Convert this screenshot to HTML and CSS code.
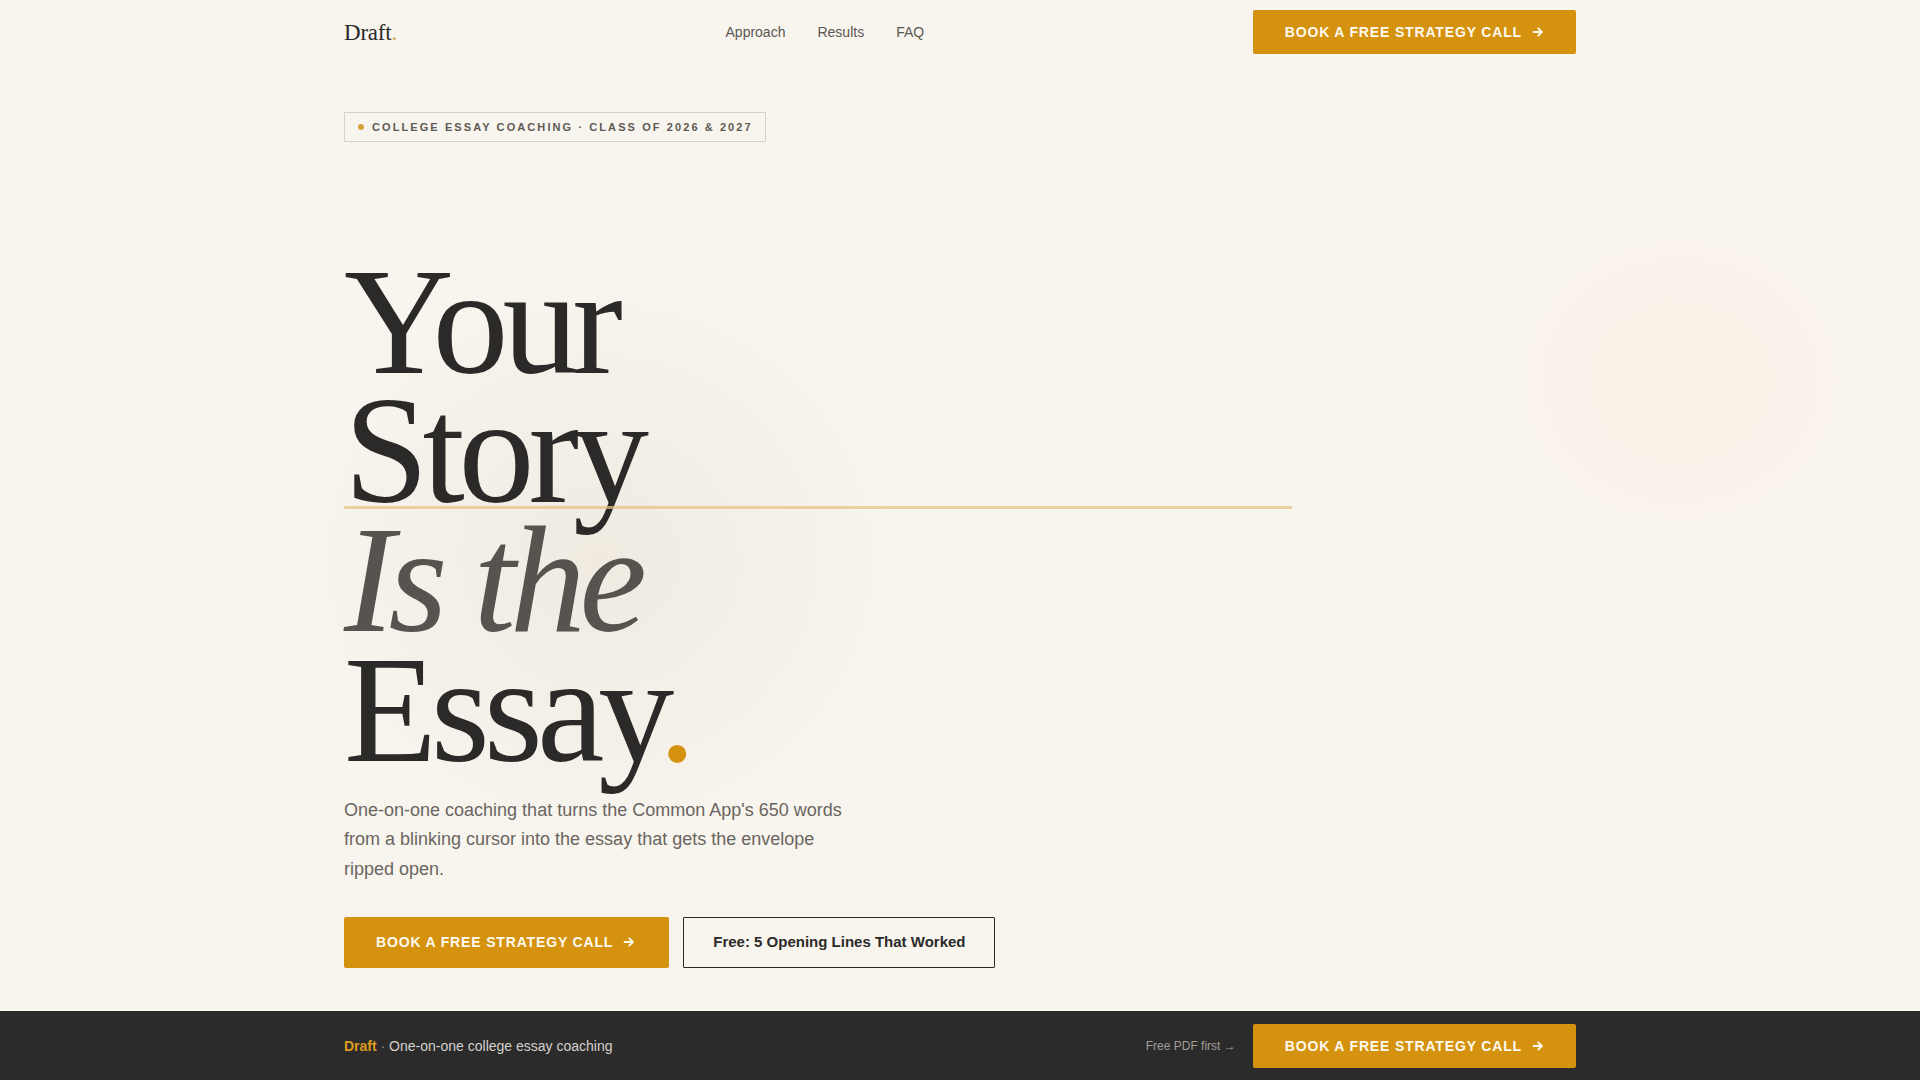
FILE: index.html
```html
<!DOCTYPE html>
<html lang="en">
<head>
<meta charset="utf-8">
<title>Draft — College Essay Coaching</title>
<link rel="stylesheet" href="styles.css">
</head>
<body>
  <header class="topbar">
    <div class="wrap topbar-inner">
      <a class="logo" href="#">Draft<span class="logo-dot">.</span></a>
      <nav class="nav">
        <a href="#approach">Approach</a>
        <a href="#results">Results</a>
        <a href="#faq">FAQ</a>
      </nav>
      <a class="btn btn-primary btn-compact" href="#book">BOOK A FREE STRATEGY CALL
        <svg class="arrow" viewBox="0 0 12 12" aria-hidden="true"><path d="M1.5 6h8.5M6.2 2.3L9.9 6 6.2 9.7"/></svg>
      </a>
    </div>
  </header>

  <main class="hero wrap">
    <div class="badge"><span class="badge-dot"></span>COLLEGE ESSAY COACHING · CLASS OF 2026 &amp; 2027</div>

    <h1 class="headline">
      <span class="line">Your</span>
      <span class="line line-mark">Story</span>
      <span class="line line-italic">Is the</span>
      <span class="line">Essay<span class="accent">.</span></span>
    </h1>

    <p class="lede">One-on-one coaching that turns the Common App's 650 words from a blinking cursor into the essay that gets the envelope ripped open.</p>

    <div class="actions">
      <a class="btn btn-primary btn-large" href="#book">BOOK A FREE STRATEGY CALL
        <svg class="arrow" viewBox="0 0 12 12" aria-hidden="true"><path d="M1.5 6h8.5M6.2 2.3L9.9 6 6.2 9.7"/></svg>
      </a>
      <a class="btn btn-outline" href="#pdf">Free: 5 Opening Lines That Worked</a>
    </div>
  </main>

  <div class="cta-bar">
    <div class="wrap cta-bar-inner">
      <p class="cta-brand"><strong>Draft</strong> <span class="sep">·</span> One-on-one college essay coaching</p>
      <div class="cta-right">
        <a class="cta-link" href="#pdf">Free PDF first →</a>
        <a class="btn btn-primary btn-compact" href="#book">BOOK A FREE STRATEGY CALL
          <svg class="arrow" viewBox="0 0 12 12" aria-hidden="true"><path d="M1.5 6h8.5M6.2 2.3L9.9 6 6.2 9.7"/></svg>
        </a>
      </div>
    </div>
  </div>
</body>
</html>
```

FILE: styles.css
```css
* { box-sizing: border-box; }

html, body { height: 100%; }

body {
  margin: 0;
  font-family: "Liberation Sans", Arial, sans-serif;
  color: #2b2a28;
  background-color: #f8f5ef;
  background-image:
    radial-gradient(ellipse 320px 300px at 600px 560px, rgba(226, 216, 200, 0.36), rgba(226, 216, 200, 0) 100%),
    radial-gradient(ellipse 360px 320px at 1680px 380px, rgba(252, 230, 208, 0.22), rgba(252, 230, 208, 0) 100%);
  background-repeat: no-repeat;
  overflow: hidden;
}

a { text-decoration: none; color: inherit; }

.wrap {
  width: 1232px;
  margin: 0 auto;
}

/* ---------- top bar ---------- */
.topbar-inner {
  height: 64px;
  display: flex;
  align-items: center;
  justify-content: space-between;
}

.logo {
  font-family: "Liberation Serif", "Times New Roman", serif;
  font-size: 23px;
  color: #2b2a28;
  letter-spacing: -0.01em;
  line-height: 1;
}

.logo-dot { color: #d9a43a; }

.nav {
  display: flex;
  gap: 32px;
}

.nav a {
  font-size: 14px;
  color: #5b5752;
}

/* ---------- buttons ---------- */
.btn {
  display: inline-flex;
  align-items: center;
  font-weight: 700;
  font-size: 14px;
  line-height: 16px;
  white-space: nowrap;
}

.btn-primary {
  background: #d4920e;
  color: #fffaf0;
  letter-spacing: 0.06em;
  gap: 10px;
  border-radius: 2px;
}

.btn-compact { padding: 14px 32px 14px 32px; }
.btn-large { padding: 17.5px 34px 17.5px 32px; }

.arrow {
  width: 12px;
  height: 12px;
  fill: none;
  stroke: currentColor;
  stroke-width: 1.8;
  stroke-linecap: round;
  stroke-linejoin: round;
}

.btn-outline {
  border: 1px solid #2b2a28;
  color: #2b2a28;
  font-size: 15px;
  padding: 16.5px 28px 16.5px 29px;
  background: transparent;
  border-radius: 1px;
}

/* ---------- hero ---------- */
.hero {
  padding-top: 48px;
}

.badge {
  display: inline-flex;
  align-items: center;
  height: 30px;
  padding: 0 12px 0 13px;
  border: 1px solid #d7d2ca;
  font-size: 11px;
  font-weight: 700;
  letter-spacing: 0.19em;
  color: #5e5954;
}

.badge-dot {
  width: 6px;
  height: 6px;
  border-radius: 50%;
  background: #d6a136;
  margin-right: 8px;
}

.headline {
  margin: 116px 0 0;
  font-family: "Liberation Serif", "Times New Roman", serif;
  font-weight: 400;
  font-size: 152px;
  line-height: 0.85;
  letter-spacing: -0.04em;
  color: #2b2a28;
}

.line {
  display: block;
  position: relative;
}

/* thin gold rule under the second line */
.line-mark::after {
  content: "";
  position: absolute;
  left: 0;
  bottom: 7px;
  width: 948px;
  height: 3px;
  background: rgba(230, 196, 130, 0.72);
}

.line-italic {
  font-style: italic;
  color: #57534f;
}

.accent { color: #d4920e; }

.lede {
  margin: 21px 0 0;
  max-width: 512px;
  font-size: 18px;
  line-height: 1.65;
  color: #6a655f;
}

.actions {
  margin-top: 32px;
  display: flex;
  gap: 14px;
}

/* ---------- sticky call-to-action bar ---------- */
.cta-bar {
  position: fixed;
  left: 0;
  right: 0;
  bottom: 0;
  height: 69px;
  background: #2b2b2b;
}

.cta-bar-inner {
  height: 100%;
  display: flex;
  align-items: center;
  justify-content: space-between;
}

.cta-brand {
  margin: 0;
  font-size: 14px;
  color: #d5d1ca;
}

.cta-brand strong { color: #dc9d1c; }
.cta-brand .sep { color: #8d8983; }

.cta-right {
  display: flex;
  align-items: center;
  gap: 17px;
}

.cta-link {
  font-size: 12px;
  color: #a29d96;
}
```
